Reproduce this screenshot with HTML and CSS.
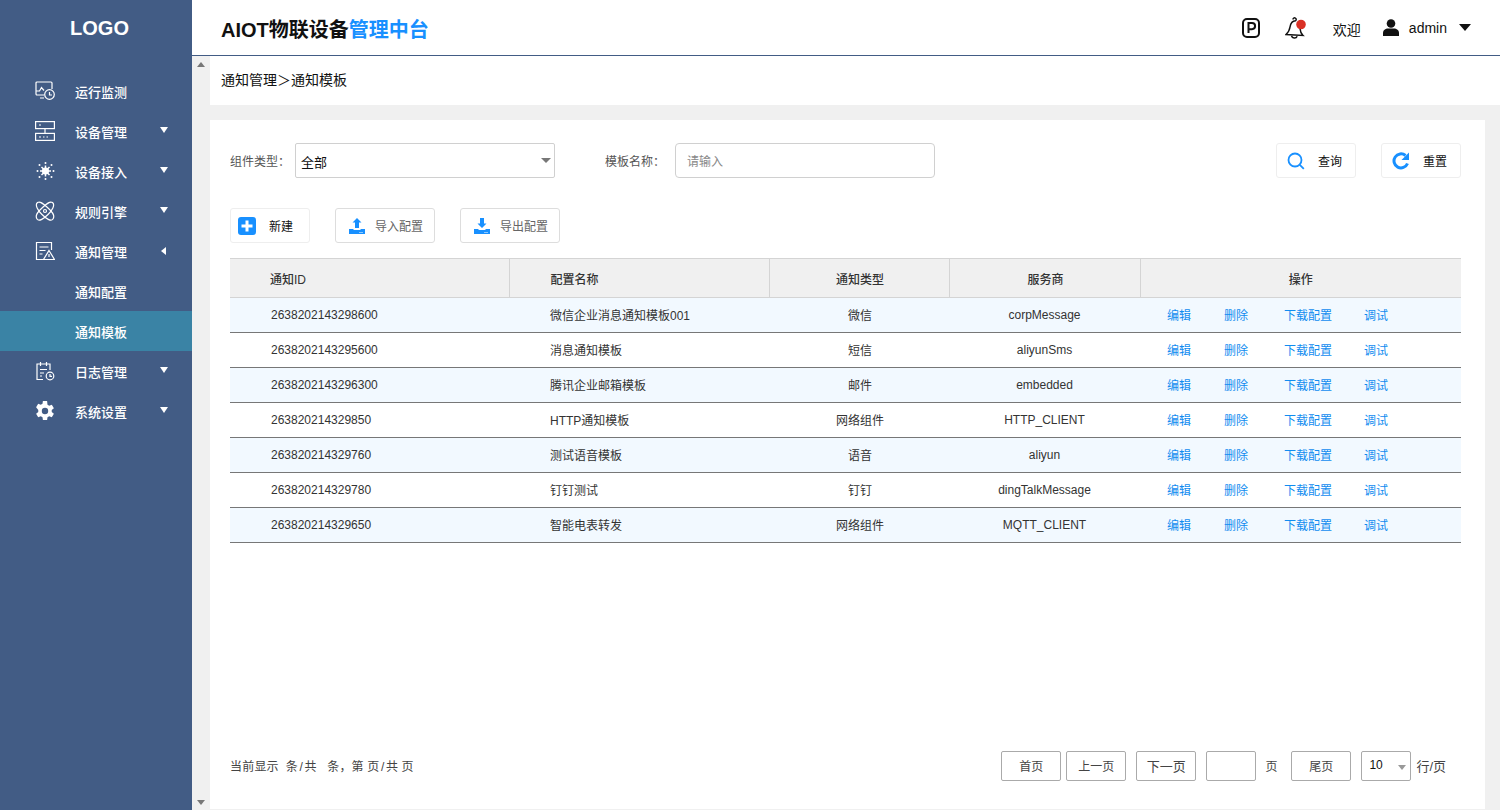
FILE: index.html
```html
<!DOCTYPE html>
<html lang="zh-CN">
<head>
<meta charset="utf-8">
<title>通知模板</title>
<link rel="stylesheet" href="styles.css">
</head>
<body>
<div class="app">
  <aside class="sidebar">
    <div class="logo">LOGO</div>
    <nav class="menu">
      <div class="item"><svg class="mi" viewBox="0 0 20 20"><path d="M9 14H2a1 1 0 0 1-1-1V2a1 1 0 0 1 1-1h14a1 1 0 0 1 1 1V8M1 10h3.500l2-3.500 2.500 3M5 17h4" /><circle cx="14.500" cy="13.500" r="4.800"/><path d="M14.500 11v3h2.500"/></svg><span class="lbl">运行监测</span></div>
      <div class="item"><svg class="mi" viewBox="0 0 20 20"><rect x=".6" y=".6" width="18.800" height="7"/><rect x=".6" y="12.400" width="18.800" height="7"/><path d="M4 4h2M4 16h2M8 16h1.500M11.500 16h1.500M10 7.600v4.800"/></svg><span class="lbl">设备管理</span><i class="down"></i></div>
      <div class="item"><svg class="mi" viewBox="0 0 20 20"><circle class="fill" cx="10.500" cy="10" r="3.600"/><path class="ray" d="M10.500 4.500v11M5 10h11M6.500 6l8 8M14.500 6l-8 8"/><circle class="fill" cx="10.500" cy="2" r="1"/><circle class="fill" cx="10.500" cy="18" r="1"/><circle class="fill" cx="2.500" cy="10" r="1"/><circle class="fill" cx="18.500" cy="10" r="1"/><circle class="fill" cx="4.500" cy="4" r="1"/><circle class="fill" cx="16.500" cy="4" r="1"/><circle class="fill" cx="4.500" cy="16" r="1"/><circle class="fill" cx="16.500" cy="16" r="1"/></svg><span class="lbl">设备接入</span><i class="down"></i></div>
      <div class="item"><svg class="mi" viewBox="0 0 20 20"><path d="M2.500 1.500c3-2 6.500 2 11 6s6.500 7.500 4.500 10.500-7-.5-11-4.500S-.5 4 2.500 1.500z"/><path d="M17.500 1.500c-3-2-6.500 2-11 6S0 15 2 18s7-.5 11-4.500S20.500 4 17.500 1.500z"/><circle cx="10" cy="10" r="1.500"/></svg><span class="lbl">规则引擎</span><i class="down"></i></div>
      <div class="item"><svg class="mi" viewBox="0 0 20 20"><path d="M9 18.500H1.500v-17h15V9M4.500 6h9M4.500 9.500h6M4.500 13h3"/><path d="M14 9.500l5.500 9h-11z"/><path d="M14 13v3"/></svg><span class="lbl">通知管理</span><i class="left"></i></div>
      <div class="item sub"><span class="lbl">通知配置</span></div>
      <div class="item sub on"><span class="lbl">通知模板</span></div>
      <div class="item"><svg class="mi" viewBox="0 0 20 20"><path d="M8 18.500H2V3h13v6M5.500 1v4M11.500 1v4M5 8.500h7M5 12h4M5 15h2"/><circle cx="15" cy="15" r="3.800"/><path d="M15 13v2.300h2"/></svg><span class="lbl">日志管理</span><i class="down"></i></div>
      <div class="item"><svg class="mi solid" viewBox="2.700 2 20 20"><path d="M19.400 13a7.600 7.600 0 0 0 0-2l2.200-1.700-2.100-3.600-2.600 1a7.500 7.500 0 0 0-1.700-1L14.800 2h-4.200l-.4 2.700a7.500 7.500 0 0 0-1.700 1l-2.600-1-2.100 3.600L6 11a7.600 7.600 0 0 0 0 2l-2.200 1.700 2.100 3.600 2.600-1a7.500 7.500 0 0 0 1.700 1l.4 2.700h4.200l.4-2.700a7.500 7.500 0 0 0 1.700-1l2.600 1 2.100-3.600zM12.700 15.200a3.200 3.200 0 1 1 0-6.400 3.200 3.200 0 0 1 0 6.400z"/></svg><span class="lbl">系统设置</span><i class="down"></i></div>
    </nav>
  </aside>
  <div class="right">
    <header class="top">
      <h1 class="title">AIOT物联设备<em>管理中台</em></h1>
      <div class="tools">
        <svg class="pico" viewBox="0 0 18 20"><rect x="1" y="1" width="16" height="18" rx="4"/><path d="M6.500 15V5h3.500a3 3 0 0 1 0 6.200H6.500"/></svg>
        <svg class="bell" viewBox="0 0 22 24"><path d="M8 3.500a1.600 1.600 0 1 1 2.500 1.300C7 5 5.500 8 5 11c-.4 3-1.700 5.500-4 7.500L18 19.500c-1.800-1.800-2.800-4-3-7"/><path d="M6.500 19.800a3 3 0 0 0 5.700.4"/><circle class="dot" cx="16" cy="8.500" r="4.800"/></svg>
        <span class="welcome">欢迎</span>
        <svg class="user" viewBox="0 0 16 17"><circle cx="8" cy="4.500" r="4.300"/><path d="M0 17v-3C0 11 2.500 9.500 5 9.500h6c2.500 0 5 1.500 5 4.500v3z"/></svg>
        <span class="uname">admin</span>
        <i class="caret"></i>
      </div>
    </header>
    <div class="body">
      <div class="scroll"><i class="su"></i><i class="sd"></i></div>
      <main class="main">
        <div class="crumb">通知管理＞通知模板</div>
        <section class="card">
          <div class="filters">
            <label class="flbl">组件类型：</label>
            <div class="select">全部<i></i></div>
            <label class="flbl name">模板名称：</label>
            <div class="input">请输入</div>
            <div class="fbtns">
              <button class="btn"><svg class="bi" viewBox="0 0 18 18"><circle cx="8" cy="8" r="6.500"/><path d="M12.800 12.800l4 4"/></svg><span>查询</span></button>
              <button class="btn"><svg class="bi thick" viewBox="0 0 18 18"><path d="M15.500 11.500A7 7 0 1 1 13.500 3.500"/><path class="f" d="M17 .5v7.500h-7.500z"/></svg><span>重置</span></button>
            </div>
          </div>
          <div class="actions">
            <button class="btn add"><svg class="plus" viewBox="0 0 18 18"><rect class="f" width="18" height="18" rx="3"/><path d="M9 3.500v11M3.500 9h11"/></svg><span>新建</span></button>
            <button class="btn io"><svg class="iot" viewBox="0 0 16 16"><path class="f" d="M8 0l4.500 4.500H10V10H6V4.500H3.500zM0 11h4.500v1h7v-1H16v5H0z"/><path class="w" d="M10.500 14h1v1h-1zM12.500 14h1v1h-1z"/></svg><span>导入配置</span></button>
            <button class="btn io"><svg class="iot" viewBox="0 0 16 16"><path class="f" d="M6 0h4v5.500h2.500L8 10 3.500 5.500H6zM0 11h4.500v1h7v-1H16v5H0z"/><path class="w" d="M10.500 14h1v1h-1zM12.500 14h1v1h-1z"/></svg><span>导出配置</span></button>
          </div>
          <table class="grid">
            <colgroup><col class="c1"><col class="c2"><col class="c3"><col class="c4"><col></colgroup>
            <thead><tr><th class="l first">通知ID</th><th class="l">配置名称</th><th class="nudge">通知类型</th><th class="nudge">服务商</th><th>操作</th></tr></thead>
            <tbody>
              <tr><td class="l">2638202143298600</td><td class="l">微信企业消息通知模板001</td><td class="nudge">微信</td><td>corpMessage</td><td class="ops"><a>编辑</a><a>删除</a><a>下载配置</a><a>调试</a></td></tr>
              <tr><td class="l">2638202143295600</td><td class="l">消息通知模板</td><td class="nudge">短信</td><td>aliyunSms</td><td class="ops"><a>编辑</a><a>删除</a><a>下载配置</a><a>调试</a></td></tr>
              <tr><td class="l">2638202143296300</td><td class="l">腾讯企业邮箱模板</td><td class="nudge">邮件</td><td>embedded</td><td class="ops"><a>编辑</a><a>删除</a><a>下载配置</a><a>调试</a></td></tr>
              <tr><td class="l">263820214329850</td><td class="l">HTTP通知模板</td><td class="nudge">网络组件</td><td>HTTP_CLIENT</td><td class="ops"><a>编辑</a><a>删除</a><a>下载配置</a><a>调试</a></td></tr>
              <tr><td class="l">263820214329760</td><td class="l">测试语音模板</td><td class="nudge">语音</td><td>aliyun</td><td class="ops"><a>编辑</a><a>删除</a><a>下载配置</a><a>调试</a></td></tr>
              <tr><td class="l">263820214329780</td><td class="l">钉钉测试</td><td class="nudge">钉钉</td><td>dingTalkMessage</td><td class="ops"><a>编辑</a><a>删除</a><a>下载配置</a><a>调试</a></td></tr>
              <tr><td class="l">263820214329650</td><td class="l">智能电表转发</td><td class="nudge">网络组件</td><td>MQTT_CLIENT</td><td class="ops"><a>编辑</a><a>删除</a><a>下载配置</a><a>调试</a></td></tr>
            </tbody>
          </table>
          <div class="pager">
            <div class="info">当前显示&nbsp;&nbsp;条<span class="sl">/</span>共&nbsp;&nbsp;&nbsp;条，第&nbsp;页<span class="sl">/</span>共&nbsp;页</div>
            <div class="pctl">
              <button class="pb">首页</button>
              <button class="pb">上一页</button>
              <button class="pb gap wide">下一页</button>
              <div class="pi gap"></div>
              <span class="pt">页</span>
              <button class="pb">尾页</button>
              <div class="ps">10<i></i></div>
              <span class="pr">行/页</span>
            </div>
          </div>
        </section>
      </main>
    </div>
  </div>
</div>
</body>
</html>
```
FILE: styles.css
```css
* { box-sizing: border-box; }
html, body { margin: 0; height: 100%; overflow: hidden; }
body { font-family: "Liberation Sans", "Noto Sans CJK SC", sans-serif; font-size: 12px; color: #333; background: #fff; }
.app { display: flex; width: 1500px; height: 810px; }

.sidebar { width: 192px; flex: none; background: #425c85; color: #fff; }
.logo { height: 55px; padding-top: 16px; padding-left: 7px; text-align: center; font-size: 20px; line-height: 24px; font-weight: 700; }
.menu { padding-top: 16px; }
.item { position: relative; display: flex; align-items: center; height: 40px; padding-left: 35px; font-weight: 500; }
.item.on { background: #3a83a5; }
.sub { padding-left: 75px; }
.lbl { font-size: 13px; }
.mi { width: 20px; height: 20px; margin-right: 20px; fill: none; stroke: #fff; stroke-width: 1.200; }
.mi .fill { fill: #fff; stroke: none; }
.mi .ray { stroke-width: 1.500; }
.mi.solid { fill: #fff; stroke: none; }
.down, .left { position: absolute; width: 0; height: 0; border-style: solid; }
.down { left: 160px; top: 16px; border-width: 6px 4px 0; border-color: #fff transparent transparent; }
.left { left: 161px; top: 16px; border-width: 4px 5px 4px 0; border-color: transparent #fff transparent transparent; }

.right { flex: 1; display: flex; flex-direction: column; min-width: 0; }
.top { height: 56px; flex: none; display: flex; align-items: center; justify-content: space-between; padding: 0 29px 0 29px; border-bottom: 1px solid #425c85; }
.title { margin: 4px 0 0; font-size: 20px; font-weight: 700; color: #111; line-height: 28px; }
.title em { font-style: normal; color: #1890ff; }
.tools { display: flex; align-items: center; color: #111; }
.pico { width: 18px; height: 20px; fill: none; stroke: #111; stroke-width: 2; margin-right: 25px; }
.bell { width: 22px; height: 24px; fill: none; stroke: #111; stroke-width: 1.500; margin-right: 26px; }
.bell .dot { fill: #d93025; stroke: none; }
.welcome { font-size: 14px; margin-right: 22px; margin-top: 2px; }
.user { width: 16px; height: 17px; fill: #111; margin-right: 10px; }
.uname { font-size: 14px; margin-right: 12px; }
.caret { width: 0; height: 0; border-style: solid; border-width: 7px 6.500px 0; border-color: #111 transparent transparent; }

.body { flex: 1; display: flex; min-height: 0; }
.scroll { position: relative; width: 18px; flex: none; background: #f0f0f0; }
.su, .sd { position: absolute; left: 5px; width: 0; height: 0; border-style: solid; }
.su { top: 6px; border-width: 0 4px 5px; border-color: transparent transparent #777; }
.sd { bottom: 5px; border-width: 5px 4px 0; border-color: #777 transparent transparent; }
.main { flex: 1; display: flex; flex-direction: column; background: #f0f0f0; padding-bottom: 1px; min-width: 0; }
.crumb { height: 49px; flex: none; background: #fff; padding-left: 11px; font-size: 14px; line-height: 49px; color: #111; margin-bottom: 15px; }
.card { flex: 1; background: #fff; margin-right: 15px; padding: 23px 24px 0 20px; display: flex; flex-direction: column; min-height: 0; }

.filters { display: flex; align-items: center; height: 35px; }
.flbl { width: 65px; color: #555; }
.flbl.name { width: 70px; margin-left: 50px; }
.select { position: relative; width: 260px; height: 35px; border: 1px solid #d0d0d0; border-radius: 2px; padding: 0 5px; line-height: 38px; font-size: 13px; color: #111; }
.select i { position: absolute; right: 3px; top: 14px; border-style: solid; border-width: 5px 5px 0; border-color: #777 transparent transparent; }
.input { width: 260px; height: 35px; border: 1px solid #d0d0d0; border-radius: 4px; padding-left: 11px; line-height: 36px; color: #888; }
.fbtns { margin-left: auto; display: flex; gap: 25px; }
.btn { display: flex; align-items: center; height: 35px; width: 80px; padding: 0 0 0 10px; background: #fff; border: 1px solid #eee; border-radius: 3px; font: inherit; color: #111; }
.bi { width: 18px; height: 18px; margin-right: 13px; fill: none; stroke: #1890ff; stroke-width: 1.800; }
.bi.thick { stroke-width: 3; }
.bi .f { fill: #1890ff; stroke: none; }
.actions { display: flex; gap: 25px; margin-top: 30px; }
.add { padding-left: 7px; }
.plus { width: 18px; height: 18px; margin-right: 13px; fill: none; stroke: #fff; stroke-width: 3; }
.plus .f { fill: #1890ff; stroke: none; }
.io { width: 100px; padding-left: 13px; color: #666; border-color: #ddd; }
.iot { width: 16px; height: 16px; margin-right: 10px; }
.iot .f { fill: #1890ff; }
.iot .w { fill: #fff; }
.io span { white-space: nowrap; }

.grid { width: 1231px; margin-top: 15px; border-collapse: collapse; table-layout: fixed; color: #333; }
.c1 { width: 279px; } .c2 { width: 260px; } .c3 { width: 180px; } .c4 { width: 191px; }
.grid th { height: 39px; padding: 0; background: #f0f0f0; border-top: 1px solid #d4d4d4; border-bottom: 1px solid #d4d4d4; border-right: 1px solid #d4d4d4; font-weight: 500; text-align: center; }
.grid th:last-child { border-right: 0; }
.grid td { height: 35px; padding: 0; border-bottom: 1px solid #777; text-align: center; }
.grid td:nth-child(2), .grid td:nth-child(3), .grid td:nth-child(5) { padding-bottom: 2px; }
.grid .l { text-align: left; padding-left: 41px; }
.grid .first { padding-left: 40px; }
.grid .nudge { padding-left: 2px; }
.grid tbody tr:nth-child(odd) { background: #f2f9ff; }
.grid .ops { text-align: left; padding-left: 27px; }
.ops a { color: #118cf0; margin-right: 33px; }
.ops a:nth-child(2) { margin-right: 36px; }
.ops a:nth-child(3) { margin-right: 32px; }

.pager { margin-top: auto; margin-bottom: 28px; display: flex; align-items: center; justify-content: space-between; height: 30px; }
.info { color: #444; letter-spacing: .2px; padding-bottom: 2px; }
.sl { padding: 0 1.400px; }
.pctl { display: flex; align-items: center; padding-right: 15px; color: #444; }
.pb { width: 60px; height: 30px; padding: 0 0 2px; margin-right: 5px; background: #fff; border: 1px solid #aaa; border-radius: 2px; font: inherit; color: #444; }
.pb.gap { margin-left: 5px; }
.pb.wide { font-size: 13px; }
.pi { width: 50px; height: 30px; border: 1px solid #aaa; border-radius: 2px; }
.pi.gap { margin-left: 5px; }
.pt { margin: 0 14px 0 9px; width: 12px; padding-bottom: 2px; }
.ps { position: relative; width: 50px; height: 30px; margin-left: 5px; border: 1px solid #aaa; border-radius: 2px; padding-left: 7px; line-height: 26px; color: #111; }
.ps i { position: absolute; right: 4px; top: 13px; border-style: solid; border-width: 5px 4px 0; border-color: #999 transparent transparent; }
.pr { margin-left: 5px; font-size: 13px; padding-bottom: 2px; }
```
